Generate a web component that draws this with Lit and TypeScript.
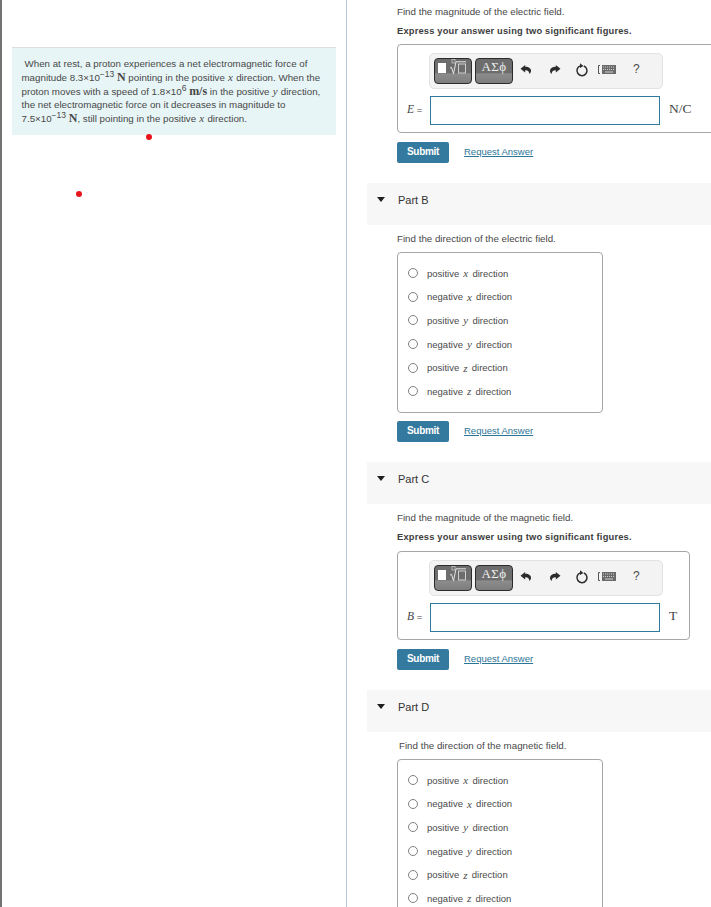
import { LitElement, html, css, svg } from 'lit'
import { customElement } from 'lit/decorators.js'

const DIRECTIONS: [string, string][] = [
  ['positive', 'x'],
  ['negative', 'x'],
  ['positive', 'y'],
  ['negative', 'y'],
  ['positive', 'z'],
  ['negative', 'z'],
]

@customElement('app-root')
export class AppRoot extends LitElement {
  static styles = css`
    :host {
      display: block;
      width: 711px;
      height: 907px;
      overflow: hidden;
      background: #fff;
      font-family: 'Liberation Sans', sans-serif;
      color: #3a3a3a;
      font-size: 9px;
    }

    .page {
      position: relative;
      display: flex;
      height: 907px;
      overflow: hidden;
    }

    .left {
      width: 347px;
      flex: none;
      box-sizing: border-box;
      border-left: 2px solid #737373;
      border-right: 1px solid #b9c7df;
      padding: 47px 10px 0 10px;
    }

    .intro {
      box-sizing: border-box;
      height: 88px;
      background: #e7f5f6;
      border-top: 1px solid #dcdfe2;
      padding: 9px 10px 0 9.500px;
      font-size: 9.75px;
      color: #484848;
      white-space: nowrap;
    }
    .intro div { height: 13.800px; line-height: 13.800px; }
    .intro .first { padding-left: 3px; }
    .intro .unit { font-family: 'Liberation Serif', serif; font-weight: 700; font-size: 12px; }
    .intro i { margin: 0 0.500px; }
    sup { font-size: 8.500px; line-height: 0; vertical-align: 4px; }
    i { font-family: 'Liberation Serif', serif; font-style: italic; font-size: 11px; }

    .dot {
      position: absolute;
      width: 6px;
      height: 6px;
      border-radius: 50%;
      background: #e8141c;
    }

    .right {
      flex: 1;
      min-width: 0;
      padding-left: 20px;
      white-space: nowrap;
    }

    .text {
      margin: 0 0 0 30px;
      height: 13px;
      line-height: 13px;
      font-size: 9.75px;
      color: #484848;
    }
    .text.strong { margin-top: 7px; font-weight: 700; font-size: 9.300px; letter-spacing: 0.2px; color: #3d3d3d; }
    .text.shift { margin-left: 32px; }
    .text.below { margin-top: 7px; }
    .lead { padding-top: 5px; }

    .answer {
      box-sizing: border-box;
      height: 89px;
      margin: 6px 0 0 30px;
      border: 1px solid #a6a6a6;
      border-radius: 4px;
      padding: 8px 0 0 31px;
    }
    .answer.open { margin-right: -6px; }
    .answer.closed { width: 293px; margin-top: 7px; }

    .toolbar {
      box-sizing: border-box;
      width: 234px;
      height: 36px;
      background: #f3f3f3;
      border: 1px solid #e2e2e2;
      border-radius: 5px;
      display: flex;
      align-items: center;
      padding-left: 4px;
    }

    .tpl {
      box-sizing: border-box;
      width: 38px;
      height: 26px;
      margin-right: 3px;
      border: 1px solid #2b2b2b;
      border-radius: 4px;
      background: linear-gradient(#6d6d6d 0, #6d6d6d 58%, #8c8c8c 62%, #7d7d7d 100%);
      color: #efefef;
      display: flex;
      align-items: flex-start;
      justify-content: center;
      font-family: 'Liberation Serif', serif;
      font-size: 13px;
      line-height: 15px;
      letter-spacing: 0.4px;
      overflow: hidden;
    }

    .tool {
      display: block;
      flex: none;
      color: #2c2c2c;
      margin-top: -3px;
    }

    .help {
      font-size: 12px;
      color: #4b4b4b;
      margin-left: 17px;
      margin-top: -4px;
    }

    .eq {
      display: flex;
      align-items: center;
      margin: 7px 0 0 -22px;
      height: 29px;
    }
    .eq .label {
      width: 23px;
      flex: none;
      font-size: 9.500px;
      color: #444;
      margin-bottom: 3px;
    }
    .eq .label i { font-size: 11.500px; }
    .eq .field {
      box-sizing: border-box;
      width: 230px;
      height: 29px;
      background: #fff;
      border: 1px solid #2f7a9c;
      flex: none;
    }
    .eq .unit {
      margin: 0 0 4px 9px;
      font-family: 'Liberation Serif', serif;
      font-size: 13.500px;
      color: #444;
    }

    .actions {
      display: flex;
      align-items: center;
      margin: 9px 0 0 30px;
      height: 21px;
    }
    .choices + .actions { margin-top: 8px; }
    .submit {
      box-sizing: border-box;
      width: 52px;
      height: 21px;
      border-radius: 2px;
      background: #337a9e;
      color: #fff;
      font-size: 10px;
      font-weight: 700;
      letter-spacing: -0.3px;
      line-height: 20px;
      text-align: center;
    }
    .request {
      margin: 0 0 2px 15px;
      color: #2d7597;
      font-size: 9.500px;
      text-decoration: underline;
    }

    .part {
      box-sizing: border-box;
      height: 42px;
      margin-top: 20px;
      background: #f7f7f7;
      display: flex;
      align-items: flex-start;
      padding-top: 10px;
      font-size: 11px;
      line-height: 14px;
      color: #333;
    }
    .caret {
      width: 0;
      height: 0;
      margin: 4px 0 0 10px;
      border-left: 4px solid transparent;
      border-right: 4px solid transparent;
      border-top: 5px solid #1f1f1f;
    }
    .part span { margin-left: 13px; }

    .choices {
      box-sizing: border-box;
      width: 206px;
      height: 161px;
      margin: 7px 0 0 30px;
      padding: 8.500px 0 0 10px;
      border: 1px solid #a6a6a6;
      border-radius: 4px;
    }
    .choices.cut { height: 170px; }
    .choice {
      display: flex;
      align-items: center;
      height: 23.600px;
      font-size: 9.500px;
      color: #4a4a4a;
      white-space: pre;
    }
    .radio {
      box-sizing: border-box;
      width: 10px;
      height: 10px;
      margin-right: 9px;
      border: 1px solid #808080;
      border-radius: 50%;
      background: #fff;
    }
    .choice i { font-size: 11px; margin: 0 1.500px; }
  `

  private templateIcon() {
    return svg`<svg width="30" height="22" viewBox="0 0 30 22" fill="none">
      <rect x="0" y="4" width="8" height="10" fill="#fff"/>
      <path d="M12 9l1.500-.7 2 6.500 2.500-12h10" stroke="#e4e4e4" stroke-width="1"/>
      <rect x="14" y="0.500" width="3" height="3.500" stroke="#cfcfcf" stroke-width=".7"/>
      <rect x="20.500" y="5" width="7" height="9" stroke="#cfcfcf" stroke-width="1"/>
    </svg>`
  }

  private undoIcon(flip = false) {
    return svg`<svg class="tool" width="12" height="12" viewBox="0 0 12 12" style=${flip ? 'transform:scaleX(-1)' : ''}>
      <path fill="currentColor" d="M5.200 1 .5 4.800l4.700 3.800V6.200c2.300-.2 3.700.6 4.300 3.800.9-1 1.500-2.100 1.500-3.300 0-2.200-2.200-4-5.800-3.900z"/>
    </svg>`
  }

  private toolbar() {
    return html`
      <div class="toolbar">
        <div class="tpl">${this.templateIcon()}</div>
        <div class="tpl">ΑΣϕ</div>
        <span style="width:4px"></span>
        ${this.undoIcon()}
        <span style="width:17px"></span>
        ${this.undoIcon(true)}
        <span style="width:14px"></span>
        <svg class="tool" width="14" height="14" viewBox="0 0 14 14" fill="none">
          <path d="M5.400 2.900a5 5 0 1 0 3.400.1" stroke="#2c2c2c" stroke-width="1.500"/>
          <path d="M5 .2 8.400 3 5 5z" fill="#2c2c2c"/>
        </svg>
        <span style="width:9px"></span>
        <svg class="tool" width="18" height="9" viewBox="0 0 18 9" fill="none">
          <path d="M2 .5H.5v8H2" stroke="#555"/>
          <rect x="4" y="0" width="14" height="9" fill="#6a6a6a"/>
          <path d="M5 2h12M5 4.500h12" stroke="#cfcfcf" stroke-dasharray="1 1"/>
          <path d="M7 7h8" stroke="#cfcfcf"/>
        </svg>
        <span class="help">?</span>
      </div>
    `
  }

  private answer(symbol: string, unit: string, open: boolean) {
    return html`
      <div class="answer ${open ? 'open' : 'closed'}">
        ${this.toolbar()}
        <div class="eq">
          <span class="label"><i>${symbol}</i> =</span>
          <div class="field"></div>
          <span class="unit">${unit}</span>
        </div>
      </div>
    `
  }

  private actions() {
    return html`
      <div class="actions">
        <div class="submit">Submit</div>
        <span class="request">Request Answer</span>
      </div>
    `
  }

  private choices(cut = false) {
    return html`
      <div class="choices ${cut ? 'cut' : ''}">
        ${DIRECTIONS.map(
          ([sign, axis]) => html`
            <div class="choice"><span class="radio"></span>${sign} <i>${axis}</i> direction</div>
          `
        )}
      </div>
    `
  }

  render() {
    return html`
      <div class="page">
        <div class="left">
          <div class="intro">
            <div class="first">When at rest, a proton experiences a net electromagnetic force of</div>
            <div>magnitude 8.3×10<sup>−13</sup> <span class="unit">N</span> pointing in the positive <i>x</i> direction. When the</div>
            <div>proton moves with a speed of 1.8×10<sup>6</sup> <span class="unit">m/s</span> in the positive <i>y</i> direction,</div>
            <div>the net electromagnetic force on it decreases in magnitude to</div>
            <div>7.5×10<sup>−13</sup> <span class="unit">N</span>, still pointing in the positive <i>x</i> direction.</div>
          </div>
        </div>
        <div class="dot" style="left:146px;top:134px"></div>
        <div class="dot" style="left:76px;top:191px"></div>

        <div class="right">
          <div class="lead">
            <p class="text">Find the magnitude of the electric field.</p>
            <p class="text strong">Express your answer using two significant figures.</p>
          </div>
          ${this.answer('E', 'N/C', true)}
          ${this.actions()}

          <div class="part"><div class="caret"></div><span>Part B</span></div>
          <p class="text below">Find the direction of the electric field.</p>
          ${this.choices()}
          ${this.actions()}

          <div class="part"><div class="caret"></div><span>Part C</span></div>
          <p class="text below">Find the magnitude of the magnetic field.</p>
          <p class="text strong">Express your answer using two significant figures.</p>
          ${this.answer('B', 'T', false)}
          ${this.actions()}

          <div class="part"><div class="caret"></div><span>Part D</span></div>
          <p class="text shift below">Find the direction of the magnetic field.</p>
          ${this.choices(true)}
        </div>
      </div>
    `
  }
}

declare global {
  interface HTMLElementTagNameMap {
    'app-root': AppRoot
  }
}
